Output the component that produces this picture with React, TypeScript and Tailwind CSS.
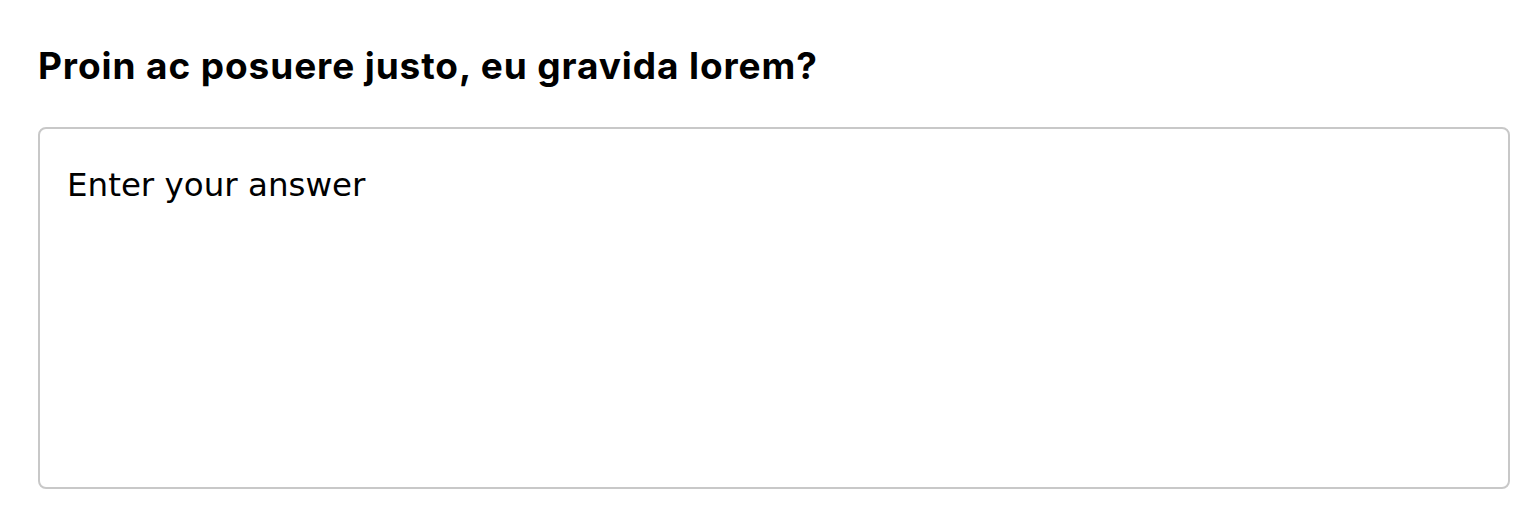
import React from "react";

export default function App() {
  return (
    <div className="min-h-screen bg-white px-[38px] pt-[40px]">
      <h2 className="font-['Inter','Liberation_Sans',sans-serif] text-[37px] leading-[52px] font-bold text-black tracking-[0.9px]">
        Proin ac posuere justo, eu gravida lorem?
      </h2>
      <textarea
        className="mt-[35px] block w-[1472px] h-[362px] resize-none rounded-[8px] border-2 border-[#c8c8c8] px-[27px] py-[35px] font-['DejaVu_Sans','Liberation_Sans',sans-serif] text-[32.5px] leading-[42px] text-black placeholder:text-black outline-none"
        placeholder="Enter your answer"
      />
    </div>
  );
}
